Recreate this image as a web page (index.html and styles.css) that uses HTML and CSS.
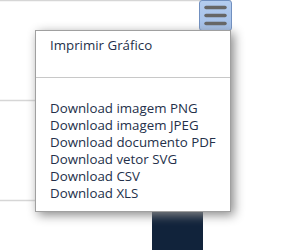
FILE: index.html
```html
<!DOCTYPE html>
<html lang="pt">
<head>
<meta charset="utf-8">
<link rel="stylesheet" href="styles.css">
</head>
<body>
<div class="chart">
  <svg class="plot" width="285" height="250" viewBox="0 0 285 250">
    <line x1="0" y1="0.5" x2="231" y2="0.5" stroke="#d6d6d6" stroke-width="1.5"/>
    <line x1="0" y1="100.5" x2="231" y2="100.5" stroke="#d6d6d6" stroke-width="1.5"/>
    <line x1="0" y1="200.5" x2="231" y2="200.5" stroke="#d6d6d6" stroke-width="1.5"/>
    <rect x="152" y="150" width="51" height="100" fill="#11233b"/>
  </svg>
  <div class="menu-button">
    <svg width="32" height="30" viewBox="0 0 32 30">
      <line x1="7" y1="6.5" x2="26" y2="6.5" stroke="#666" stroke-width="3.5" stroke-linecap="round"/>
      <line x1="7" y1="14.5" x2="26" y2="14.5" stroke="#666" stroke-width="3.5" stroke-linecap="round"/>
      <line x1="7" y1="22.5" x2="26" y2="22.5" stroke="#666" stroke-width="3.5" stroke-linecap="round"/>
    </svg>
  </div>
  <div class="menu">
    <div class="item">Imprimir Gráfico</div>
    <hr class="sep">
    <div class="item">Download imagem PNG</div>
    <div class="item">Download imagem JPEG</div>
    <div class="item">Download documento PDF</div>
    <div class="item">Download vetor SVG</div>
    <div class="item">Download CSV</div>
    <div class="item">Download XLS</div>
  </div>
</div>
</body>
</html>
```
FILE: styles.css
```css
html, body {
  margin: 0;
  padding: 0;
  background: #fff;
}
.chart {
  position: relative;
  width: 285px;
  height: 250px;
  overflow: hidden;
  font-family: "Open Sans", "DejaVu Sans", sans-serif;
}
.plot {
  position: absolute;
  left: 0;
  top: 0;
}
.menu-button {
  position: absolute;
  left: 199px;
  top: 0;
  width: 31px;
  height: 29px;
  border: 1px solid #7190c0;
  border-radius: 3px;
  background: linear-gradient(#b3ccef, #a3bfe8);
}
.menu-button svg {
  display: block;
  margin-left: -1px;
}
.menu {
  position: absolute;
  left: 35px;
  top: 30px;
  width: 194px;
  height: 168px;
  padding: 6px 0;
  border: 1px solid #a0a0a0;
  background: #fff;
  box-shadow: 3px 3px 10px #888;
}
.item {
  padding: 0 14px;
  font-size: 13.3px;
  line-height: 17px;
  color: #24304a;
  white-space: nowrap;
}
.sep {
  margin: 23px 0 22px;
  border: 0;
  border-top: 1px solid #c8c8c8;
  height: 0;
}
```
